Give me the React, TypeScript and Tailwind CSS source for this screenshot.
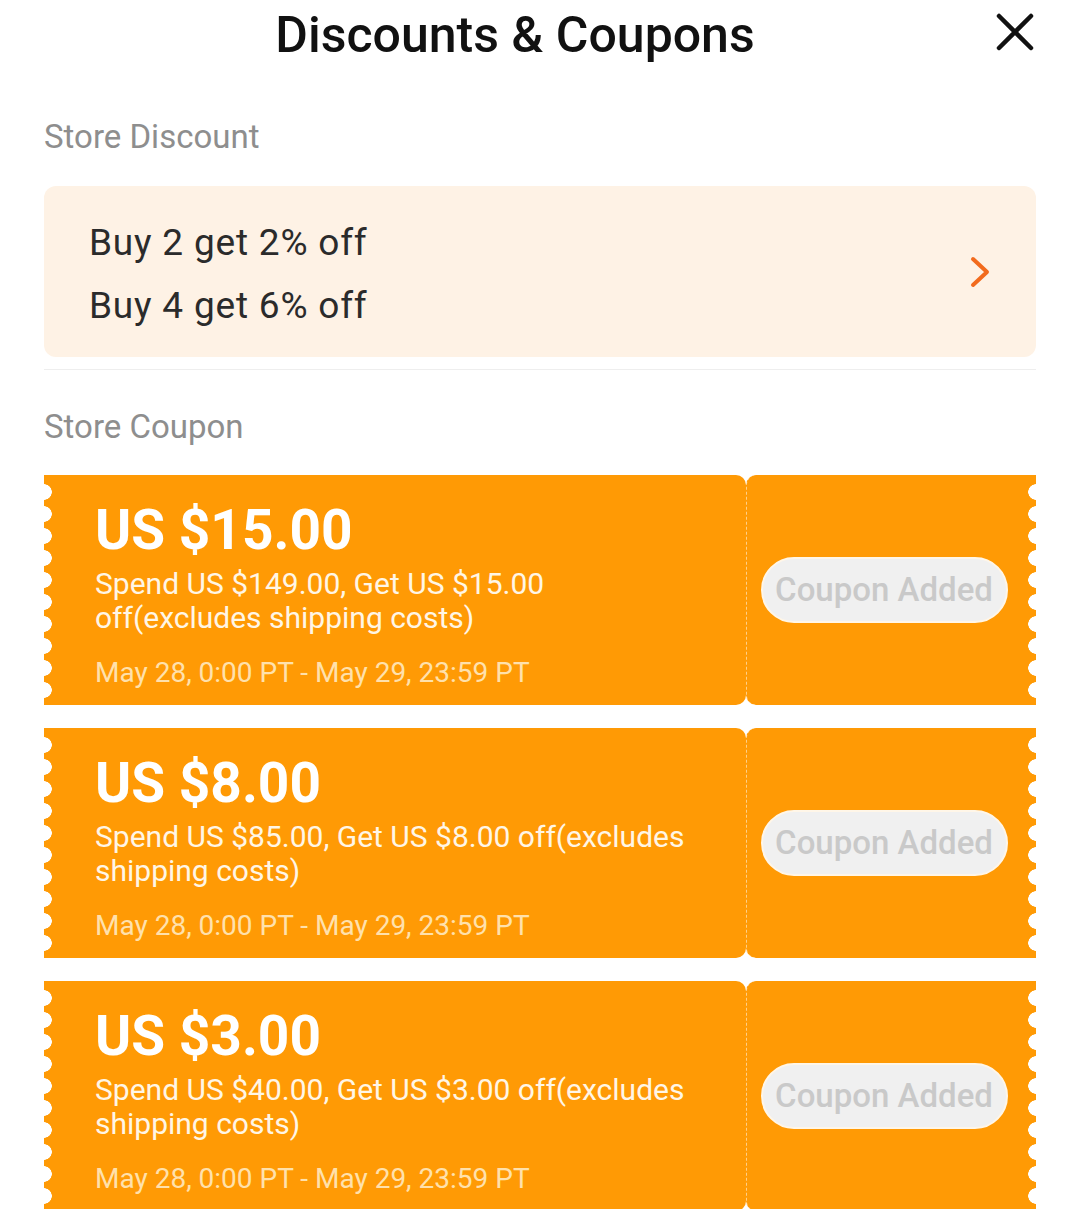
const coupons = [
  {
    amount: "US $15.00",
    desc: "Spend US $149.00, Get US $15.00 off(excludes shipping costs)",
    period: "May 28, 0:00 PT - May 29, 23:59 PT",
  },
  {
    amount: "US $8.00",
    desc: "Spend US $85.00, Get US $8.00 off(excludes shipping costs)",
    period: "May 28, 0:00 PT - May 29, 23:59 PT",
  },
  {
    amount: "US $3.00",
    desc: "Spend US $40.00, Get US $3.00 off(excludes shipping costs)",
    period: "May 28, 0:00 PT - May 29, 23:59 PT",
  },
];

function Coupon({ amount, desc, period }: (typeof coupons)[number]) {
  return (
    <div className="flex h-[230px]">
      <div className="relative flex-1 rounded-r-[10px] bg-[#FF9A05] pl-[51px] pt-[25px]">
        {/* perforated edge */}
        <div className="absolute left-0 top-[6px] h-[220px] w-[8px] bg-[radial-gradient(circle_at_0_50%,#ffffff_7.5px,transparent_8px)] bg-[length:8px_22px]" />
        <p className="text-[55px] font-bold leading-[60px] text-white">
          {amount}
        </p>
        <p className="mt-[7px] w-[605px] text-[30px] leading-[34px] text-[#FFF6E6]">
          {desc}
        </p>
        <p className="mt-[21px] text-[28px] leading-[34px] text-[#FFE1AC]">
          {period}
        </p>
      </div>
      <div className="relative flex w-[290px] items-center justify-center rounded-l-[10px] border-l border-dashed border-[#FFCF88] bg-[#FF9A05] pr-[15px]">
        <button className="h-[66px] w-[247px] rounded-full border-2 border-[#FFF6E8] bg-[#F0F0F0] text-[33px] font-medium text-[#C9C9C9]">
          Coupon Added
        </button>
        <div className="absolute right-0 top-[6px] h-[220px] w-[8px] bg-[radial-gradient(circle_at_100%_50%,#ffffff_7.5px,transparent_8px)] bg-[length:8px_22px]" />
      </div>
    </div>
  );
}

export default function App() {
  return (
    <div className="h-[1209px] overflow-hidden bg-white font-['Roboto',sans-serif]">
      <div className="relative flex h-[70px] items-center justify-center pr-[50px]">
        <h1 className="text-[50px] font-medium leading-[66px] text-[#111111]">
          Discounts &amp; Coupons
        </h1>
        <button className="absolute right-[46px] top-[13px]">
          <svg width="38" height="38" viewBox="0 0 38 38">
            <path
              d="M3 3L35 35M35 3L3 35"
              stroke="#111111"
              strokeWidth="4.5"
              strokeLinecap="round"
            />
          </svg>
        </button>
      </div>

      <div className="px-[44px]">
        <h2 className="mt-[47px] text-[33px] leading-[40px] text-[#8E8E8E]">
          Store Discount
        </h2>

        <div className="mt-[29px] flex h-[171px] items-center justify-between rounded-[12px] bg-[#FEF2E5] pl-[45px] pr-[45px] pt-[4px]">
          <div className="text-[37px] leading-[63px] tracking-[0.8px] text-[#2B2B2B]">
            <p>Buy 2 get 2% off</p>
            <p>Buy 4 get 6% off</p>
          </div>
          <svg width="22" height="34" viewBox="0 0 22 34" className="-mt-[4px]">
            <path
              d="M4 4L18 17L4 30"
              fill="none"
              stroke="#F26B1D"
              strokeWidth="4"
              strokeLinecap="round"
              strokeLinejoin="round"
            />
          </svg>
        </div>

        <div className="mt-[12px] h-px bg-[#EEEEEE]" />

        <h2 className="mt-[37px] text-[33px] leading-[40px] text-[#8E8E8E]">
          Store Coupon
        </h2>

        <div className="mt-[28px] flex flex-col gap-[23px]">
          {coupons.map((c, i) => (
            <Coupon key={i} {...c} />
          ))}
        </div>
      </div>
    </div>
  );
}
